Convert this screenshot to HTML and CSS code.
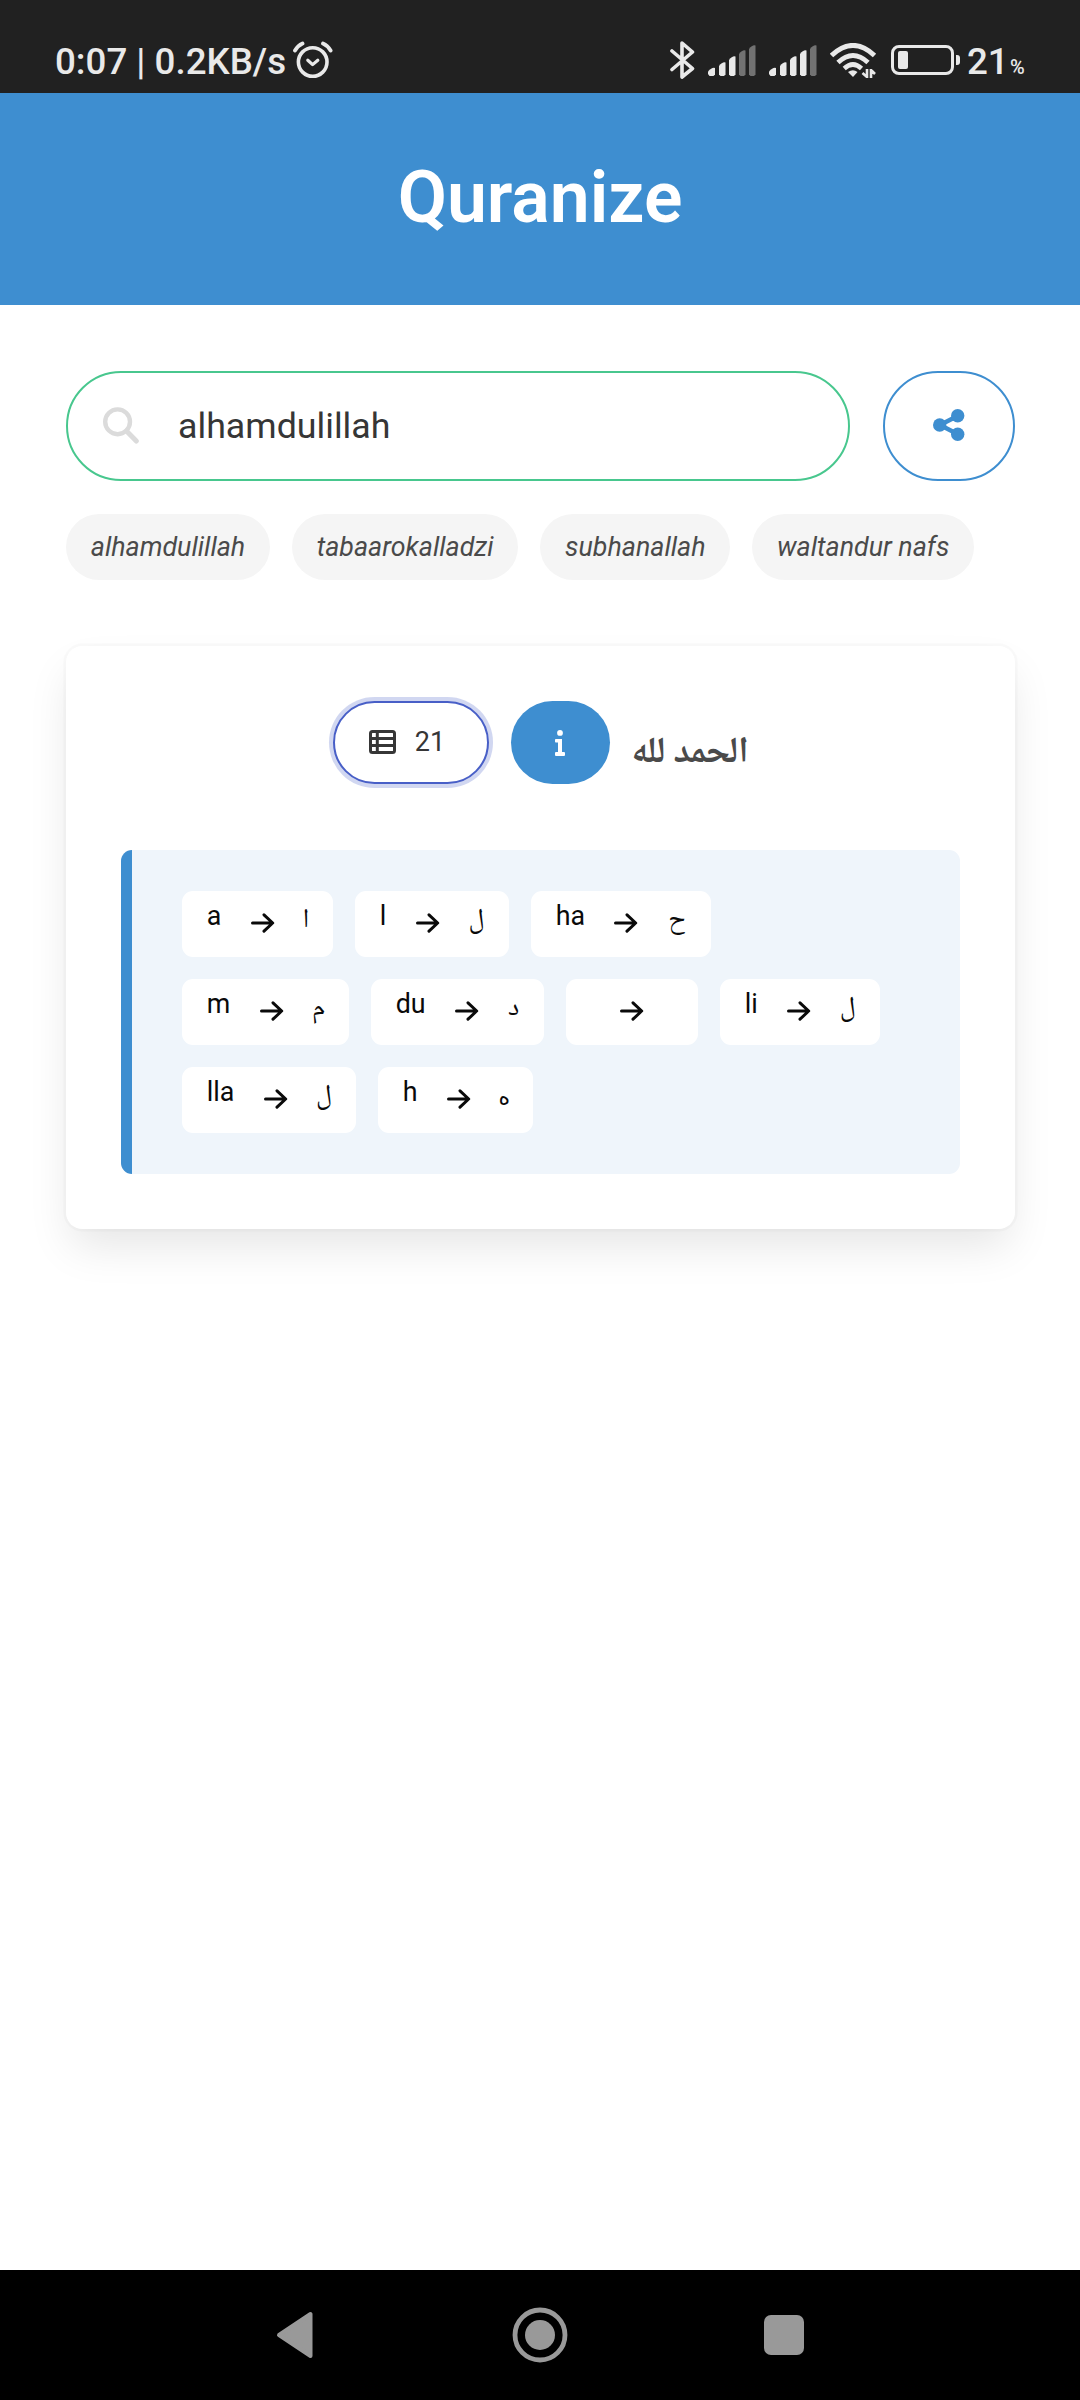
FILE: index.html
```html
<!DOCTYPE html>
<html lang="en">
<head>
<meta charset="utf-8">
<title>Quranize</title>
<link rel="stylesheet" href="styles.css">
</head>
<body>
<svg class="defs" width="0" height="0" aria-hidden="true">
  <symbol id="arrow" viewBox="0 0 24 20"><path d="M1.500 10H21.500M13 1.800L21.700 10L13 18.200" fill="none" stroke="currentColor" stroke-width="3" stroke-linecap="round" stroke-linejoin="round"/></symbol>
</svg>
<div class="status">
  <span class="clock">0:07 | 0.2KB/s</span>
  <svg class="alarm" width="40" height="38" viewBox="0 0 40 38" fill="none" stroke="#e9e9e9" stroke-linecap="round" stroke-linejoin="round"><circle cx="19.700" cy="21" r="14.300" stroke-width="3.600"/><path d="M14.800 19.200L19.600 23.600L24.800 19.200" stroke-width="3.200"/><path d="M2 9.500Q5 4.500 9.500 2.500M37.600 9.500Q34.600 4.500 30 2.500" stroke-width="3.800"/></svg>
  <span class="spacer"></span>
  <svg class="bt" width="25" height="40" viewBox="0 0 25 40" fill="none" stroke="#e9e9e9" stroke-width="3.600" stroke-linejoin="round" stroke-linecap="round"><path d="M2 11L22.500 28.500L12 37V3L22.500 12L2 29.500"/></svg>
  <svg class="sig" width="48" height="32" viewBox="0 0 48 32" fill="#e9e9e9"><path d="M0 29V26.500Q4 22 7 23V29.500L5.500 31H1.500Z"/><path d="M11 29.500V21Q14.500 16.500 17.500 17.500V29.500L16 31H12.500Z"/><path d="M21 29.500V15Q24.500 10.500 27.500 11.500V29.500L26 31H22.500Z"/><path fill="#727272" d="M31 29.500V9Q34.500 4.500 37.500 5.500V29.500L36 31H32.500Z"/><path fill="#727272" d="M41 29.500V4Q44.500 -.5 47.500 .5V29.500L46 31H42.500Z"/></svg>
  <svg class="sig" width="48" height="32" viewBox="0 0 48 32" fill="#e9e9e9"><path d="M0 29V26.500Q4 22 7 23V29.500L5.500 31H1.500Z"/><path d="M11 29.500V21Q14.500 16.500 17.500 17.500V29.500L16 31H12.500Z"/><path d="M21 29.500V15Q24.500 10.500 27.500 11.500V29.500L26 31H22.500Z"/><path d="M31 29.500V9Q34.500 4.500 37.500 5.500V29.500L36 31H32.500Z"/><path fill="#727272" d="M41 29.500V4Q44.500 -.5 47.500 .5V29.500L46 31H42.500Z"/></svg>
  <svg class="wifi" width="47" height="36" viewBox="0 0 47 36" fill="none" stroke="#e9e9e9"><path d="M1.500 12.500Q23 -7.500 44.500 12.500" stroke-width="5"/><path d="M8 19.500Q23 5.500 38 19.500" stroke-width="4.800"/><path d="M14.200 25.500Q23 17.500 31.500 25.500" stroke-width="4.600"/><path d="M18 29Q23 25.500 27.500 29L23 34Z" fill="#e9e9e9" stroke="none"/><path d="M37 26V35M32.500 30L37 34M41 35V26M41 27L45 31" stroke-width="2.600"/></svg>
  <svg class="battery" width="70" height="30" viewBox="0 0 70 30"><rect x="1.500" y="1.500" width="60" height="27" rx="6.500" fill="none" stroke="#e9e9e9" stroke-width="3"/><rect x="7" y="6" width="10" height="18" rx="2" fill="#e9e9e9"/><path d="M65 10H66Q69 10 69 13V17Q69 20 66 20H65Z" fill="#e9e9e9"/></svg>
  <span class="level">21</span><span class="percent">%</span>
</div>
<header class="hero"><h1>Quranize</h1></header>
<main>
  <div class="search-row">
    <div class="search">
      <svg width="36" height="37" viewBox="0 0 36 37" fill="none" stroke="#dbdbdb"><circle cx="14.600" cy="14.800" r="12.400" stroke-width="4.400"/><path d="M23.500 24L33.300 34" stroke-width="5" stroke-linecap="round"/></svg>
      <span>alhamdulillah</span>
    </div>
    <button class="share"><svg width="32" height="32" viewBox="0 0 32 32" fill="#3e8ed0"><path d="M7 16L24.500 7M7 16L24.500 25" stroke="#3e8ed0" stroke-width="4.500"/><circle cx="6.700" cy="16" r="6.700"/><circle cx="24.700" cy="6.800" r="6.700"/><circle cx="24.700" cy="25.200" r="6.700"/></svg></button>
  </div>
  <div class="tags"><span>alhamdulillah</span><span>tabaarokalladzi</span><span>subhanallah</span><span>waltandur nafs</span></div>
  <section class="card">
    <div class="actions">
      <button class="count"><svg width="27" height="24" viewBox="0 0 27 24" fill="none" stroke="#363636" stroke-width="3"><rect x="1.500" y="1.500" width="24" height="21" rx="2"/><path d="M1.500 8.500H25.500M1.500 15.500H25.500M8.300 1.500V22.500"/></svg><span>21</span></button>
      <button class="info"><svg width="12" height="26" viewBox="0 0 12 26" fill="#fff"><circle cx="6" cy="2.900" r="2.900"/><path d="M1.800 9H8V22H10Q11 22 11 23V25Q11 26 10 26H2Q1 26 1 25V23Q1 22 2 22H4V12.500H1.800Q1 12.500 1 11.500V10Q1 9 1.800 9Z"/></svg></button>
      <span class="quran" lang="ar" dir="rtl">الحمد لله</span>
    </div>
    <div class="message">
      <div class="tile alef"><span>a</span><svg><use href="#arrow"/></svg><b>ا</b></div>
      <div class="tile lam"><span>l</span><svg><use href="#arrow"/></svg><b>ل</b></div>
      <div class="tile hah"><span>ha</span><svg><use href="#arrow"/></svg><b>ح</b></div>
      <div class="tile meem"><span>m</span><svg><use href="#arrow"/></svg><b>م</b></div>
      <div class="tile dal"><span>du</span><svg><use href="#arrow"/></svg><b>د</b></div>
      <div class="tile blank"><svg><use href="#arrow"/></svg></div>
      <div class="tile lam-i"><span>li</span><svg><use href="#arrow"/></svg><b>ل</b></div>
      <div class="tile lam-a"><span>lla</span><svg><use href="#arrow"/></svg><b>ل</b></div>
      <div class="tile heh"><span>h</span><svg><use href="#arrow"/></svg><b>ه</b></div>
    </div>
  </section>
</main>
<nav class="navbar">
  <svg width="39" height="48" viewBox="0 0 39 48"><path d="M3 24L34.500 3V45Z" fill="#999" stroke="#999" stroke-width="4" stroke-linejoin="round"/></svg>
  <svg width="56" height="56" viewBox="0 0 56 56"><circle cx="28" cy="28" r="25" fill="none" stroke="#999" stroke-width="4.800"/><circle cx="28" cy="28" r="15" fill="#999"/></svg>
  <svg width="40" height="40" viewBox="0 0 40 40"><rect width="40" height="40" rx="7" fill="#999"/></svg>
</nav>
</body>
</html>
```
FILE: styles.css
```css
* { box-sizing: border-box; }
body { margin: 0; height: 2400px; background: #fff; font-family: Roboto, "Liberation Sans", sans-serif; color: #4a4a4a; display: flex; flex-direction: column; overflow: hidden; }
svg { display: block; flex: none; }
.defs { position: absolute; }
button { font: inherit; padding: 0; flex: none; display: flex; align-items: center; justify-content: center; }
.status { height: 93px; flex: none; background: #212121; color: #e9e9e9; display: flex; align-items: flex-start; padding: 0 55px 0 55px; font-size: 36.7px; font-weight: 500; line-height: 44px; white-space: nowrap; }
.clock, .level { margin-top: 40px; }
.clock { width: 231px; }
.alarm { margin: 41px 0 0 7px; }
.spacer { flex: 1; }
.bt { margin-top: 40px; }
.sig { margin: 45px 0 0 13px; }
.wifi { margin: 43px 0 0 13px; }
.battery { margin: 45px 0 0 14px; }
.level { margin-left: 6px; width: 42px; }
.percent { width: 15px; font-size: 20px; line-height: 24px; margin: 55px 0 0 1px; }
.hero { height: 212px; flex: none; background: #3e8ed0; display: flex; align-items: center; justify-content: center; }
h1 { margin: 0; padding-bottom: 3px; font-size: 71.5px; font-weight: 600; line-height: 80px; color: #fff; }
main { flex: 1; padding: 66px 65px 0 66px; }
.search-row { display: flex; gap: 33px; }
.search { flex: 1; height: 110px; border: 2px solid #48c78e; border-radius: 55px; display: flex; align-items: center; gap: 39px; padding-left: 35px; font-size: 35.75px; color: #363636; }
.search svg { margin-bottom: 2px; }
.share { width: 132px; height: 110px; border: 2px solid #3e8ed0; border-radius: 55px; background: #fff; padding-bottom: 2px; }
.tags { margin-top: 33px; display: flex; gap: 22px; font-size: 26.8px; font-style: italic; }
.tags span { height: 66px; line-height: 66px; padding: 0 24.75px; border-radius: 33px; background: #f5f5f5; white-space: nowrap; }
.card { margin-top: 66px; height: 583px; border-radius: 16.5px; padding: 55px; box-shadow: 0 22px 44px -5.5px rgba(10,10,10,.1), 0 0 0 2.75px rgba(10,10,10,.02); }
.actions { display: flex; justify-content: center; gap: 22px; height: 83px; }
.count { width: 156px; height: 83px; border: 2px solid #485fc7; border-radius: 42px; box-shadow: 0 0 0 4px rgba(72,95,199,.25); background: #fff; gap: 19px; padding: 0 7px 2px 0; font-size: 27px; color: #363636; }
.info { width: 99px; height: 83px; border: 0; border-radius: 42px; background: #3e8ed0; }
.quran { width: 117px; font-family: "Noto Naskh Arabic", "Amiri", "Scheherazade New", "DejaVu Sans", sans-serif; font-size: 36.5px; font-weight: 700; line-height: 106px; white-space: nowrap; }
.message { margin-top: 66px; height: 324px; background: #eff5fb; border-left: 11px solid #3e8ed0; border-radius: 11px; padding: 41px 70px 41px 50px; display: flex; flex-wrap: wrap; align-content: flex-start; gap: 22px; }
.tile { height: 66px; border-radius: 11px; background: #fff; color: #0a0a0a; padding: 0 24.75px; display: flex; font-size: 26.8px; line-height: 51px; }
.tile svg { width: 24px; height: 20px; margin: 22px 29.25px 0; }
.tile b { flex: 1; min-width: 0; display: flex; justify-content: center; font: 400 27px/61px "Noto Naskh Arabic", "Amiri", "Scheherazade New", "DejaVu Sans", sans-serif; }
.alef { width: 151px; }
.lam { width: 154px; }
.hah { width: 180px; }
.meem { width: 167px; }
.dal { width: 173px; }
.blank { width: 132px; }
.lam-i { width: 160px; }
.lam-a { width: 174px; }
.heh { width: 155px; }
.heh b { font-family: "DejaVu Sans", sans-serif; font-size: 22px; }
.navbar { height: 130px; flex: none; background: #000; display: flex; align-items: center; justify-content: space-between; padding: 0 276px; }
```
